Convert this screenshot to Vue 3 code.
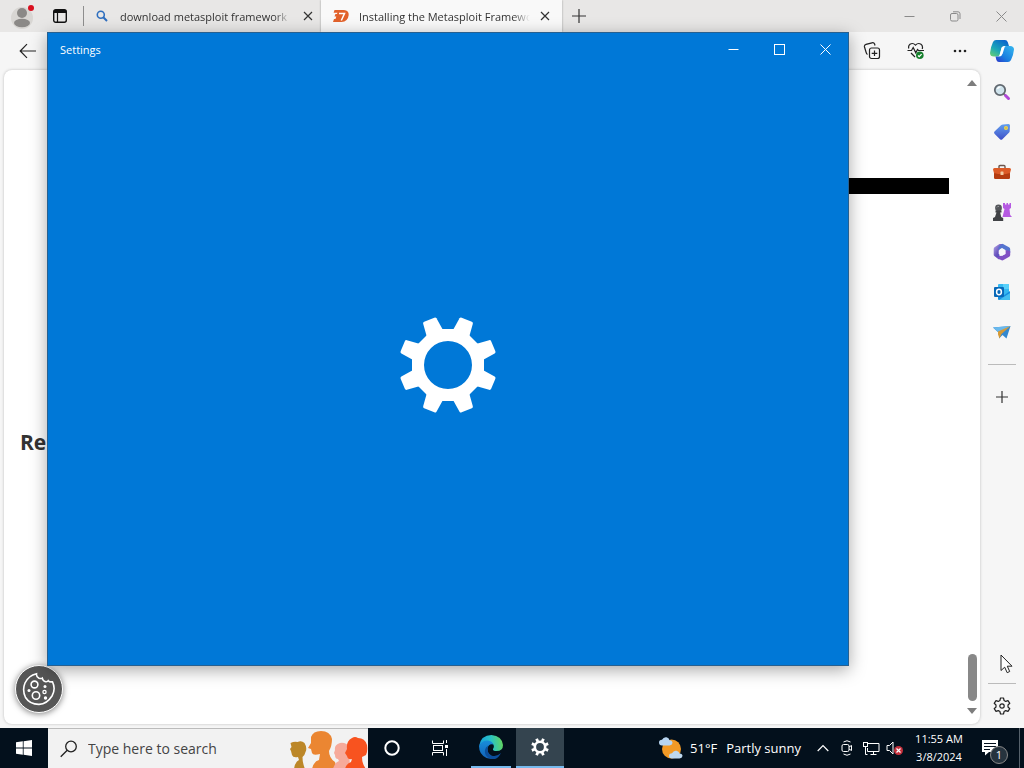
<script setup>
import { ref } from 'vue'

const query = ref('')
const teeth = [22.5, 67.5, 112.5, 157.5, 202.5, 247.5, 292.5, 337.5]
const tools = ['Search', 'Shopping', 'Tools', 'Games', 'Microsoft 365', 'Outlook', 'Drop']
</script>

<template>
  <div class="desktop">
    <main class="browser">
      <header class="tab-strip">
        <button class="profile" aria-label="Profile">
          <svg width="24" height="26" viewBox="0 0 24 26">
            <circle cx="11" cy="15" r="11" fill="#d8d6d3" />
            <circle cx="11" cy="10" r="5" fill="#8b8987" />
            <ellipse cx="11" cy="20" rx="8" ry="4.200" fill="#8b8987" />
            <circle cx="20" cy="5" r="3" fill="#d9101f" />
          </svg>
        </button>
        <button class="workspaces" aria-label="Tab actions">
          <svg width="16" height="16" viewBox="0 0 16 16">
            <rect x="1.700" y="1.700" width="12.600" height="12.600" rx="2" fill="none" stroke="#111" stroke-width="1.400" />
            <path d="M2 2h12v3H2z" fill="#111" />
            <path d="M5.500 5v9" stroke="#111" stroke-width="1.200" />
          </svg>
        </button>
        <span class="strip-line"></span>
        <div class="tab">
          <svg width="12" height="12" viewBox="0 0 12 12" fill="none" stroke="#2f6fbf" stroke-width="1.600">
            <circle cx="4.800" cy="4.800" r="3.500" />
            <path d="M7.300 7.300 11 11" stroke-width="2" />
          </svg>
          <span class="tab-title">download metasploit framework</span>
          <button class="tab-close" aria-label="Close tab">
            <svg width="10" height="10" viewBox="0 0 10 10"><path d="M1 1l8 8M9 1 1 9" stroke="#333" stroke-width="1.200" /></svg>
          </button>
        </div>
        <div class="tab active">
          <svg width="16" height="12" viewBox="0 0 16 12">
            <path d="M1.500 0H11q5 .4 4.700 5Q15 11.500 8.500 12H0l1-3h1.500l.8-2.500H1.500L2.400 4H4L4.400 2.800H.6z" fill="#e2622b" />
            <path d="M6 3.500h5.500L8.300 10.500" fill="none" stroke="#fff" stroke-width="1.500" />
          </svg>
          <span class="tab-title">Installing the Metasploit Framework</span>
          <button class="tab-close" aria-label="Close tab">
            <svg width="10" height="10" viewBox="0 0 10 10"><path d="M1 1l8 8M9 1 1 9" stroke="#333" stroke-width="1.200" /></svg>
          </button>
        </div>
        <button class="new-tab" aria-label="New tab">
          <svg width="14" height="14" viewBox="0 0 14 14"><path d="M7 0v14M0 7h14" stroke="#333" stroke-width="1.200" /></svg>
        </button>
        <div class="window-controls">
          <button aria-label="Minimize">
            <svg width="11" height="11" viewBox="0 0 11 11"><path d="M.5 5.500h10" stroke="#8a8a8a" /></svg>
          </button>
          <button aria-label="Restore">
            <svg width="11" height="11" viewBox="0 0 11 11" fill="none" stroke="#8a8a8a">
              <rect x=".5" y="2.500" width="7.500" height="7.500" rx="1.500" />
              <path d="M3 .8h5q2 0 2 2V8" />
            </svg>
          </button>
          <button aria-label="Close">
            <svg width="11" height="11" viewBox="0 0 11 11"><path d="M.5.5l10 10M10.500.5l-10 10" stroke="#8a8a8a" /></svg>
          </button>
        </div>
      </header>

      <nav class="toolbar">
        <button aria-label="Back">
          <svg width="18" height="16" viewBox="0 0 18 16" fill="none" stroke="#222" stroke-width="1.200"><path d="M17 8H1.500M8 1.200 1.200 8 8 14.800" /></svg>
        </button>
        <div class="toolbar-right">
          <button aria-label="Collections">
            <svg width="18" height="18" viewBox="0 0 18 18" fill="none" stroke="#222" stroke-width="1.200">
              <rect x="6.500" y="6" width="10" height="10.500" rx="2" />
              <path d="M11.500 8.500v5.500M8.700 11.300h5.600" />
              <path d="M4.500 12.500Q3.500 12 3 10L1.500 5Q1 3 3 2.400L9 .8q2-.4 2.600 1.200l.4 1.500" />
            </svg>
          </button>
          <button aria-label="Browser essentials">
            <svg width="18" height="18" viewBox="0 0 18 18" fill="none" stroke="#222" stroke-width="1.200">
              <path d="M1.800 6.500Q1 3.800 3 2.200 6 .4 8.500 3.200 11 .4 14 2.200q2.200 1.600 1.200 4.800" />
              <path d="M.5 8.500h4l1.700-3 2.600 5.300 1.700-3.300 1 1H17M4 11l4 4" />
              <circle cx="12.800" cy="13.300" r="3.800" fill="#16802d" stroke="none" />
              <path d="m11 13.500 1.200 1.200 2.400-2.600" stroke="#fff" />
            </svg>
          </button>
          <button aria-label="More">
            <svg width="14" height="4" viewBox="0 0 14 4" fill="#222"><circle cx="2" cy="2" r="1.300" /><circle cx="7" cy="2" r="1.300" /><circle cx="12" cy="2" r="1.300" /></svg>
          </button>
          <button class="copilot" aria-label="Copilot">
            <svg width="24" height="22" viewBox="0 0 24 22">
              <defs>
                <linearGradient id="cp-a" x1="0" y1="1" x2=".7" y2="0"><stop offset="0" stop-color="#6fd36b" /><stop offset=".45" stop-color="#1aa7b8" /><stop offset="1" stop-color="#0a67cc" /></linearGradient>
                <linearGradient id="cp-b" x1="1" y1="0" x2="0" y2="1"><stop offset="0" stop-color="#35b8ef" /><stop offset=".6" stop-color="#1b7fe0" /><stop offset="1" stop-color="#2c35c8" /></linearGradient>
              </defs>
              <path d="M6 0h9q2 0 2.800 2.200L19 6h-4.500q-2.200 0-3 2.500L9.500 15q-.6 1.500-2.500 1.500H4Q0 16.500 0 13 .6 7 3 2 4 0 6 0z" fill="url(#cp-a)" />
              <path d="M18 22H9q-2 0-2.600-2L5.500 16.500H9q1.500 0 2.200-2L13.500 8q.8-2 3-2H20q4 0 4 3.500-.6 6-3 10.500-1 2-3 2z" fill="url(#cp-b)" />
              <path d="M11.500 7.500q1-1.500 3.500-1.500l-2.300 7.500q-.8 2.500-3.200 3z" fill="#fff" />
            </svg>
          </button>
        </div>
      </nav>

      <div class="workspace">
        <section class="page">
          <div class="document">
            <div class="code-bar"></div>
            <h2>Re</h2>
          </div>
          <div class="scrollbar">
            <svg width="10" height="6" viewBox="0 0 10 6"><path d="M0 6 5 0l5 6z" fill="#7d7d7d" /></svg>
            <div class="thumb"></div>
            <svg width="10" height="6" viewBox="0 0 10 6"><path d="M0 0l5 6 5-6z" fill="#7d7d7d" /></svg>
          </div>
          <button class="cookie" aria-label="Cookie preferences">
            <svg width="34" height="34" viewBox="0 0 34 34" fill="none" stroke="#fff" stroke-width="1.600">
              <path d="M14.500 1.700q-.5 3 2.500 4.600 2.500.5 3.300-.1.500 3 3.400 3.500 2 .2 2.600-1 1.200 1.600 4.200 1.100Q34 17 30 24q-5 8-13 8.400Q8 32.500 3.500 25.500 0 18 3 11q3.500-7.500 11.500-9.300z" />
              <circle cx="12.500" cy="12.500" r="3.400" />
              <circle cx="14" cy="23.500" r="3.700" />
              <circle cx="22.500" cy="20" r="1.600" stroke-width="1.300" />
              <g fill="#fff" stroke="none"><circle cx="7" cy="18.500" r="1.500" /><circle cx="23" cy="14.500" r="1.500" /><circle cx="23.500" cy="26" r="1.700" /></g>
            </svg>
          </button>
        </section>

        <aside class="sidebar">
          <button v-for="tool in tools" :key="tool" :aria-label="tool">
            <svg v-if="tool === 'Search'" width="18" height="18" viewBox="0 0 18 18">
              <path d="m10.500 10.500 2 2" stroke="#777" stroke-width="2" />
              <path d="m12.500 12.500 3 3" stroke="#b048d8" stroke-width="3" stroke-linecap="round" />
              <circle cx="7" cy="7" r="5.200" fill="#cfe3ec" stroke="#626970" stroke-width="1.800" />
              <path d="M4.500 6Q5 4 7.500 3.800" stroke="#fff" stroke-width="1.300" fill="none" />
            </svg>
            <svg v-else-if="tool === 'Shopping'" width="18" height="18" viewBox="0 0 18 18">
              <defs><linearGradient id="tag" x1="0" y1="0" x2="0" y2="1"><stop offset="0" stop-color="#62a0ef" /><stop offset="1" stop-color="#3f50c8" /></linearGradient></defs>
              <path d="M10 1.500 15.500 1q1.500 0 1.500 1.500l-.3 5.500q0 1-.8 1.800l-6.500 6.400q-1.200 1-2.400 0L1.500 10.800q-1-1.200 0-2.300L8 2.300q.8-.8 2-.8z" fill="url(#tag)" />
              <circle cx="13" cy="5" r="2" fill="#f2d64b" /><circle cx="13" cy="5" r=".8" fill="#b5a850" />
            </svg>
            <svg v-else-if="tool === 'Tools'" width="18" height="18" viewBox="0 0 18 18">
              <path d="M6 6V3.500Q6 2.500 7 2.500h4q1 0 1 1V6" fill="none" stroke="#6d554b" stroke-width="1.400" />
              <rect x="1" y="9" width="16" height="7" rx="1.200" fill="#b53c10" />
              <path d="M1.500 5h15q1.500 0 1.500 1.500L17 10q-8 2.500-16 0L0 6.500Q0 5 1.500 5z" fill="#dc5a26" />
              <rect x="7.500" y="8.500" width="3" height="3.500" rx=".6" fill="#f2c9a0" />
            </svg>
            <svg v-else-if="tool === 'Games'" width="20" height="18" viewBox="0 0 20 18">
              <path d="M11 0h2v1.500h1.500V0H16v1.500h1.500V0H19v5l-1.500 1 .7 6L20 14H10.500l2-8L11 5z" fill="#b65ae2" />
              <circle cx="6.500" cy="5" r="3.400" fill="#54565a" />
              <path d="M3.500 7.500h6V9.500H8.200l1 4.500 2 1v3H1v-3l2-1 1.500-4.500h-1z" fill="#404246" />
              <path d="M4.800 4.500Q5.500 3 7 3.500" stroke="#929498" fill="none" />
            </svg>
            <svg v-else-if="tool === 'Microsoft 365'" width="18" height="18" viewBox="0 0 18 18">
              <defs><linearGradient id="m3" x1="0" y1="0" x2="1" y2="1"><stop offset="0" stop-color="#b6a8e8" /><stop offset=".5" stop-color="#6752bd" /><stop offset="1" stop-color="#3d51c5" /></linearGradient></defs>
              <path d="M6.500 1h4L6.500 5v8l3 1.500-3.500 2-4-3Q.7 12.800.7 12V6Q.7 5 1.500 4.300z" fill="url(#m3)" />
              <path d="m9.500.8 6.500 3.500q1.200.6 1.200 2V10L12 6.800 9 5 5.500 7V4z" fill="#5575cf" />
              <path d="M17.200 8v4q0 1-1 1.700L10.500 17q-1.200.8-2.500 0l-4.500-2.500L12.500 11V7z" fill="#8050c5" />
              <path d="m9 5.500 3.300 1.900v3.700L9 13l-3.300-1.900V7.400z" fill="#f7f7fb" />
            </svg>
            <svg v-else-if="tool === 'Outlook'" width="18" height="18" viewBox="0 0 18 18">
              <rect x="5" y="1" width="11" height="12" rx="1" fill="#35b8f1" /><path d="M10 1h6v5h-6z" fill="#58d0fa" />
              <path d="m5 8 6.500 4L17 8v8q0 1-1 1H6q-1 0-1-1z" fill="#168de0" /><path d="m6 17 11-7v6q0 1-1 1z" fill="#43bff1" />
              <rect x="1" y="4" width="10" height="10" rx="1" fill="#0868b8" />
              <ellipse cx="6" cy="9" rx="2.400" ry="2.700" fill="none" stroke="#fff" stroke-width="1.500" />
            </svg>
            <svg v-else width="18" height="18" viewBox="0 0 18 18">
              <path d="M0 4.500 17.500 3 13.500 15.500 9.500 12 6 15.500V10z" fill="#3388cf" />
              <path d="M0 4.500 17.500 3 6 10z" fill="#69b9ed" />
              <path d="M17.500 3 5 8.500v3l1.500 4 2-4.500z" fill="#d69a36" />
            </svg>
          </button>
          <hr>
          <button class="add" aria-label="Customize">
            <svg width="12" height="12" viewBox="0 0 12 12"><path d="M6 0v12M0 6h12" stroke="#333" stroke-width="1.200" /></svg>
          </button>
          <hr class="push">
          <button class="side-settings" aria-label="Sidebar settings">
            <svg width="18" height="18" viewBox="0 0 18 18" fill="none" stroke="#222" stroke-width="1.200">
              <path d="M7.500 1h3l.6 2.500 1.600.9L15 3.600 16.800 6.300 15 8v2l1.800 1.700L15 14.400l-2.300-.8-1.600.9L10.500 17h-3l-.6-2.500-1.600-.9-2.300.8-1.800-2.700L3 10V8L1.200 6.300 3 3.600l2.300.8 1.600-.9z" stroke-linejoin="round" />
              <circle cx="9" cy="9" r="2.200" />
            </svg>
          </button>
        </aside>
      </div>

      <section class="settings-window">
        <header>
          <h1>Settings</h1>
          <div class="window-controls">
            <button aria-label="Minimize"><svg width="11" height="11" viewBox="0 0 11 11"><path d="M.5 5.500h10" stroke="#fff" /></svg></button>
            <button aria-label="Maximize"><svg width="11" height="11" viewBox="0 0 11 11"><rect x=".5" y=".5" width="10" height="10" fill="none" stroke="#fff" /></svg></button>
            <button aria-label="Close"><svg width="11" height="11" viewBox="0 0 11 11"><path d="M.5.5l10 10M10.500.5l-10 10" stroke="#fff" /></svg></button>
          </div>
        </header>
        <div class="splash">
          <svg width="104" height="104" viewBox="-52 -52 104 104" fill="#fff">
            <path
              v-for="a in teeth"
              :key="a"
              d="M-5.500-49h11q1.500 0 1.700 1.500L9-32H-9l1.800-15.500q.2-1.500 1.700-1.500z"
              :transform="`rotate(${a})`"
            />
            <path fill-rule="evenodd" d="M-15-36h30L36-15v30L15 36h-30L-36 15v-30zM-24 0a24 24 0 1 0 48 0a24 24 0 1 0-48 0z" />
          </svg>
        </div>
      </section>

      <svg class="pointer" width="13" height="20" viewBox="0 0 13 20"><path d="M1 1v15.500l3.700-3.300 2.500 5.500 2.500-1.200-2.400-5.300H12z" fill="#fff" stroke="#222" /></svg>
    </main>

    <footer class="taskbar">
      <button class="start" aria-label="Start">
        <svg width="16" height="16" viewBox="0 0 16 16" fill="#fff"><path d="M0 2.300 6.800 1.300v6.300H0zM7.600 1.200 16 0v7.600H7.600zM0 8.400h6.800v6.300L0 13.700zM7.600 8.400H16V16l-8.400-1.200z" /></svg>
      </button>
      <label class="search">
        <svg width="18" height="18" viewBox="0 0 18 18" fill="none" stroke="#222" stroke-width="1.300"><circle cx="11" cy="6.500" r="5.300" /><path d="m7.200 10.300-6.500 6.500" /></svg>
        <input v-model="query" type="text" placeholder="Type here to search" aria-label="Type here to search">
        <svg class="people" width="78" height="40" viewBox="0 0 78 40">
          <path d="M4 40q1-7 5-9l-1-3q-5 1-6-2l-1-4-1-2 1.500-2-1-4q4-2 7-1 4-2 7 1 3 5 1 9-1 4-3 5 0 6 2.500 12z" fill="#bc8728" />
          <path d="M22 40q2-8 7-9l1-6q-7 2-8-1l-1-4-3-1 3-5V8q2-6 10-6 9 0 11 8 0 7-3 12 0 7 6 11l2 7z" fill="#eb8632" />
          <path d="M43 40q1-6 6-8l-1-2q-3 0-3-4l-1-2 1-3q-1-5 5-7 6-1 9 4l1 22z" fill="#f6aa9a" />
          <path d="M55 40q1-5 6-7l1-3q-4 1-5-3l-2-3 2-4q-1-8 5-11 3-2 6 0 7 0 9 7 1 6-1 10l-4 2q0 7 4 12z" fill="#f8531f" />
        </svg>
      </label>
      <button class="task" aria-label="Cortana"><svg width="16" height="16" viewBox="0 0 16 16"><circle cx="8" cy="8" r="6.700" fill="none" stroke="#fff" stroke-width="2" /></svg></button>
      <button class="task" aria-label="Task view">
        <svg width="17" height="16" viewBox="0 0 17 16" fill="none" stroke="#fff"><path d="M.5.5v3h11v-3M.5 15.500v-3h11v3M14.500 0v3M14.500 9v7" /><rect x="1.500" y="5.500" width="9" height="5" /><path d="M13 5h3v3h-3z" fill="#fff" stroke="none" /></svg>
      </button>
      <button class="task running" aria-label="Microsoft Edge">
        <svg width="24" height="24" viewBox="0 0 24 24">
          <defs>
            <linearGradient id="ed-a" x1="0" y1=".4" x2="1" y2=".3"><stop offset="0" stop-color="#169ede" /><stop offset=".5" stop-color="#29c3c5" /><stop offset="1" stop-color="#66d65a" /></linearGradient>
            <linearGradient id="ed-b" x1="0" y1="0" x2="0" y2="1"><stop offset="0" stop-color="#188edb" /><stop offset="1" stop-color="#1262b8" /></linearGradient>
          </defs>
          <path d="M0 11Q2 0 12.500 0 23 1 24 10q0 6-6.500 6-4 0-3.500-2 2-3-.5-5.500Q7 4 0 11z" fill="url(#ed-a)" />
          <path d="M0 11q3-6 9-5.500 4 .5 5.500 4Q10 8 8.500 13q-.5 7 6 9 2 .5 4 0Q13 25 7.500 23 0 19.500 0 11z" fill="url(#ed-b)" />
          <path d="M9 10.500q-2 7 3.500 10 4.500 2 9.500-2.500Q18 26 11.500 23.800 5 21 6 15q.5-3 3-4.500z" fill="#0b4e9c" />
        </svg>
      </button>
      <button class="task running current" aria-label="Settings">
        <svg width="18" height="18" viewBox="-52 -52 104 104" fill="#fff">
          <rect v-for="a in teeth" :key="a" x="-8" y="-51" width="16" height="20" :transform="`rotate(${a})`" />
          <circle r="30" fill="none" stroke="#fff" stroke-width="15" />
        </svg>
      </button>

      <div class="tray">
        <button class="weather">
          <svg width="26" height="24" viewBox="0 0 26 24">
            <circle cx="13.500" cy="13" r="9.500" fill="#f39a25" />
            <path d="M4 9.500q-3 0-3-3Q1 4 4 3.800 5.500.8 8.500 1.300q2.500.5 3 3 3 .2 3 2.800-.3 2.400-3 2.400z" fill="#b8d5f1" />
            <path d="M14 22.500q-3 0-3-2.700 0-2.300 3-2.600 1.500-3 4.500-2.400 2.500.5 3 2.700 3 .2 3 2.600-.3 2.400-3 2.400z" fill="#bed8ef" />
          </svg>
          <span class="temp">51°F</span>
          <span>Partly sunny</span>
        </button>
        <button aria-label="Hidden icons"><svg width="12" height="8" viewBox="0 0 12 8"><path d="m.7 7 5.300-5.500L11.300 7" fill="none" stroke="#fff" stroke-width="1.200" /></svg></button>
        <button aria-label="Meet now">
          <svg width="12" height="16" viewBox="0 0 12 16" fill="none" stroke="#fff"><rect x="1" y="4.500" width="7" height="7" rx="1.500" /><path d="m8 7 2.500-1.500v5L8 9M2.500 2q3.500-2.500 7 0M2.500 14q3.500 2.500 7 0" /></svg>
        </button>
        <button aria-label="Network">
          <svg width="17" height="15" viewBox="0 0 17 15" fill="none" stroke="#fff"><path d="M5 2.500h11v8H4.500V7M7.500 13.500h6M10.500 11v2.500M2.500 6v7.500h2" /><rect x=".5" y="1.500" width="4" height="4" /></svg>
        </button>
        <button aria-label="Volume">
          <svg width="18" height="16" viewBox="0 0 18 16"><path d="M1 5.500h2.500L7 2v12l-3.500-3.500H1z" fill="none" stroke="#fff" /><circle cx="12.500" cy="10.500" r="4.500" fill="#c5303c" /><path d="m10.500 8.500 4 4m0-4-4 4" stroke="#fff" stroke-width="1.200" /></svg>
        </button>
        <button class="clock"><span>11:55 AM</span><span>3/8/2024</span></button>
        <button class="notices" aria-label="Notifications">
          <svg width="18" height="16" viewBox="0 0 18 16"><path d="M1 0h16v12H8l-4 3.500V12H1z" fill="#fff" /><path d="M3 3.500h12M3 6.500h12M3 9.500h6" stroke="#04101d" /></svg>
          <span class="count">1</span>
        </button>
      </div>
    </footer>
  </div>
</template>

<style>
body {
  margin: 0;
}
</style>

<style scoped>
.desktop {
  display: flex;
  flex-direction: column;
  min-height: 100vh;
  font-family: "Open Sans", "Noto Sans", sans-serif;
  font-size: 11px;
  color: #333;
}

button {
  display: flex;
  align-items: center;
  justify-content: center;
  padding: 0;
  border: 0;
  background: none;
  color: inherit;
  font: inherit;
}

svg {
  display: block;
  flex-shrink: 0;
}

.browser {
  position: relative;
  flex: 1;
  display: flex;
  flex-direction: column;
  background: #f6f6f6;
}

.tab-strip {
  display: flex;
  align-items: center;
  height: 32px;
  background: #e8e7e6;
}

.profile {
  width: 46px;
  height: 32px;
}

.workspaces {
  width: 28px;
  height: 32px;
}

.strip-line {
  width: 1px;
  height: 20px;
  margin: 0 12px 0 9px;
  background: #8e8e8e;
}

.tab {
  display: flex;
  align-items: center;
  gap: 12px;
  width: 225px;
  height: 32px;
  box-sizing: border-box;
}

.tab.active {
  gap: 10px;
  width: 241px;
  padding-left: 12px;
  background: #f9f9f9;
  box-shadow: 0 0 2px #999;
}

.tab-title {
  width: 171px;
  overflow: hidden;
  white-space: nowrap;
  mask-image: linear-gradient(to right, #000 90%, transparent);
}

.tab-close {
  width: 10px;
  height: 32px;
}

.new-tab {
  width: 34px;
  height: 32px;
}

.window-controls {
  display: flex;
  margin-left: auto;
}

.window-controls button {
  width: 46px;
  height: 32px;
}

.toolbar {
  display: flex;
  justify-content: space-between;
  height: 38px;
  padding-left: 6px;
}

.toolbar button {
  width: 44px;
  height: 38px;
}

.toolbar .copilot {
  width: 42px;
  padding-right: 2px;
}

.toolbar-right {
  display: flex;
}

.workspace {
  flex: 1;
  display: flex;
}

.page {
  position: relative;
  flex: 1;
  display: flex;
  margin: 0 0 4px 4px;
  border-radius: 8px;
  background: #fff;
  box-shadow: 0 0 3px #bbb;
}

.document {
  flex: 1;
  padding: 108px 15px 0 16px;
}

.code-bar {
  height: 16px;
  margin-left: 40px;
  background: #000;
}

h2 {
  margin: 232px 0 0;
  font-size: 21px;
  line-height: 32px;
  font-weight: 700;
  color: #333;
}

.scrollbar {
  display: flex;
  flex-direction: column;
  align-items: center;
  width: 16px;
  padding: 10px 0;
}

.thumb {
  width: 9px;
  height: 47px;
  margin: auto 0 7px;
  border-radius: 5px;
  background: #888;
}

.cookie {
  position: absolute;
  left: 11px;
  bottom: 11px;
  width: 48px;
  height: 48px;
  border: 1px solid #fff;
  border-radius: 50%;
  background: #565656;
  box-shadow: 0 1px 6px rgba(0, 0, 0, 0.5);
}

.sidebar {
  display: flex;
  flex-direction: column;
  align-items: center;
  width: 44px;
  padding: 2px 0;
}

.sidebar button {
  width: 44px;
  height: 40px;
}

.sidebar hr {
  width: 28px;
  height: 1px;
  margin: 12px 0;
  border: 0;
  background: #bbb;
}

.sidebar hr.push {
  margin: auto 0 2px;
}

.settings-window {
  position: absolute;
  top: 32px;
  right: 175px;
  bottom: 62px;
  left: 47px;
  display: flex;
  flex-direction: column;
  box-sizing: border-box;
  border: 1px solid #276090;
  background: #0078d7;
  color: #fff;
  box-shadow: 0 4px 16px rgba(0, 0, 0, 0.35);
}

.settings-window header {
  display: flex;
  align-items: center;
  height: 32px;
  padding-left: 12px;
}

h1 {
  margin: 0;
  font-size: 11px;
  font-weight: 400;
}

.splash {
  flex: 1;
  display: flex;
  align-items: center;
  justify-content: center;
}

.pointer {
  position: absolute;
  right: 11px;
  bottom: 54px;
}

.taskbar {
  display: flex;
  height: 40px;
  background: #03101c;
  color: #fff;
}

.start {
  width: 48px;
}

.search {
  display: flex;
  align-items: center;
  width: 320px;
  box-sizing: border-box;
  padding-left: 12px;
  background: #f2f2f2;
  border-top: 1px solid #bbb;
}

.search input {
  flex: 1;
  min-width: 0;
  margin-left: 10px;
  padding: 0;
  border: 0;
  outline: 0;
  background: none;
  font: inherit;
  font-size: 14px;
  color: #444;
}

.search input::placeholder {
  color: #444;
  opacity: 1;
}

.task {
  width: 48px;
}

.running {
  box-sizing: border-box;
  width: 40px;
  margin: 0 5px 0 7px;
  border-bottom: 2px solid #76b9ed;
}

.current {
  width: 48px;
  margin: 0;
  background: #34444f;
}

.tray {
  display: flex;
  margin-left: auto;
}

.tray button {
  width: 24px;
}

.tray .weather {
  width: auto;
  margin-right: 10px;
  font-size: 13px;
}

.temp {
  margin: 0 9px 0 6px;
}

.tray .clock {
  flex-direction: column;
  width: 64px;
  line-height: 18px;
}

.tray .notices {
  position: relative;
  width: 49px;
  margin-right: 4px;
  padding-right: 10px;
  border-right: 1px solid #56616b;
}

.count {
  position: absolute;
  top: 18px;
  right: 11px;
  width: 16px;
  height: 16px;
  border: 1px solid #888;
  border-radius: 50%;
  background: #26333e;
  line-height: 16px;
  text-align: center;
}
</style>
